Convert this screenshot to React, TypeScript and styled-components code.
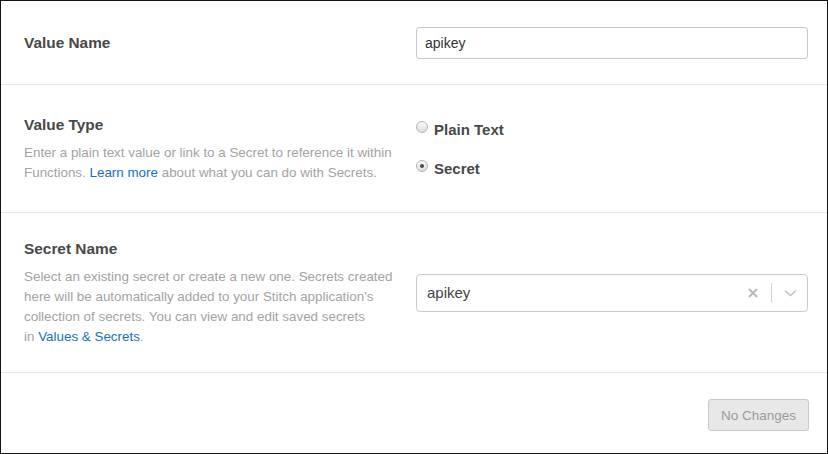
import styled, { createGlobalStyle } from "styled-components";

const GlobalStyle = createGlobalStyle`
  html, body {
    margin: 0;
    padding: 0;
    background: #fff;
  }
  body {
    font-family: "Liberation Sans", Arial, sans-serif;
  }
`;

const App = () => {
  return (
    <>
      <GlobalStyle />
      <Frame>
        <Row $h={84}>
          <Title>Value Name</Title>
          <TextInput defaultValue="apikey" />
        </Row>

        <Row $h={128}>
          <div>
            <Title>Value Type</Title>
            <Description>
              Enter a plain text value or link to a Secret to reference it within
              Functions. <Link href="#">Learn more</Link> about what you can do with
              Secrets.
            </Description>
          </div>
          <RadioGroup>
            <RadioItem>
              <RadioDot />
              Plain Text
            </RadioItem>
            <RadioItem>
              <RadioDot $checked />
              Secret
            </RadioItem>
          </RadioGroup>
        </Row>

        <Row $h={160}>
          <div>
            <Title>Secret Name</Title>
            <Description>
              Select an existing secret or create a new one. Secrets created
              here will be automatically added to your Stitch application's
              collection of secrets. You can view and edit saved secrets
              <br />
              in <Link href="#">Values &amp; Secrets</Link>.
            </Description>
          </div>
          <Select>
            <SelectValue>apikey</SelectValue>
            <SelectControls>
              <svg width="10" height="10" viewBox="0 0 10 10">
                <path d="M1 1L9 9M9 1L1 9" stroke="#b8b8b8" strokeWidth="2" />
              </svg>
              <Separator />
              <svg width="13" height="8" viewBox="0 0 13 8">
                <path d="M1 1.5L6.5 6.5L12 1.5" stroke="#c2c2c2" strokeWidth="1.4" fill="none" />
              </svg>
            </SelectControls>
          </Select>
        </Row>

        <Footer>
          <Button disabled>No Changes</Button>
        </Footer>
      </Frame>
    </>
  );
};

export default App;

const Frame = styled.div`
  width: 828px;
  height: 454px;
  box-sizing: border-box;
  border: 1px solid #141414;
  display: flex;
  flex-direction: column;
`;

const Row = styled.div<{ $h: number }>`
  box-sizing: border-box;
  min-height: ${(p) => p.$h}px;
  display: grid;
  grid-template-columns: 1fr 1fr;
  align-items: center;
  padding: 0 19px 0 23px;
  border-bottom: 1px solid #e8e8e8;
`;

const Title = styled.div`
  font-size: 15.4px;
  line-height: 20px;
  font-weight: bold;
  color: #484848;
`;

const Description = styled.p`
  margin: 8px 0 0;
  padding-right: 8px;
  font-size: 13.4px;
  line-height: 20px;
  color: #a3a3a3;
`;

const Link = styled.a`
  color: #1a6fbf;
  text-decoration: none;
`;

const TextInput = styled.input`
  box-sizing: border-box;
  height: 32px;
  width: 100%;
  padding: 0 8px;
  border: 1px solid #c8c8c8;
  border-radius: 3px;
  font-family: "Liberation Sans", Arial, sans-serif;
  font-size: 14px;
  color: #333;
  outline: none;
`;

const RadioGroup = styled.div`
  display: flex;
  flex-direction: column;
  gap: 19px;
`;

const RadioItem = styled.label`
  display: flex;
  align-items: center;
  gap: 6px;
  height: 20px;
  font-size: 15px;
  font-weight: bold;
  color: #484848;
`;

const RadioDot = styled.span<{ $checked?: boolean }>`
  box-sizing: border-box;
  width: 12px;
  height: 12px;
  margin-bottom: 4px;
  border-radius: 50%;
  border: 1px solid #b4b4b4;
  background: linear-gradient(#fcfcfc, #dcdcdc);
  display: flex;
  align-items: center;
  justify-content: center;
  &::after {
    content: "";
    display: ${(p) => (p.$checked ? "block" : "none")};
    width: 4px;
    height: 4px;
    border-radius: 50%;
    background: #4a4a4a;
  }
`;

const Select = styled.div`
  box-sizing: border-box;
  height: 38px;
  display: flex;
  align-items: center;
  justify-content: space-between;
  padding: 0 10px 0 10px;
  border: 1px solid #cbcbcb;
  border-radius: 4px;
`;

const SelectValue = styled.span`
  font-size: 15px;
  color: #444;
`;

const SelectControls = styled.div`
  display: flex;
  align-items: center;
  & > svg:first-child {
    margin-right: 13px;
  }
  & > svg:last-child {
    margin-left: 12px;
  }
`;

const Separator = styled.span`
  width: 1px;
  height: 19px;
  background: #d0d0d0;
`;

const Footer = styled.div`
  display: flex;
  justify-content: flex-end;
  padding: 26px 18px 0;
`;

const Button = styled.button`
  box-sizing: border-box;
  height: 32px;
  padding: 0 12px;
  border: 1px solid #c8c8c8;
  border-radius: 3px;
  background: #e8e8e8;
  font-family: "Liberation Sans", Arial, sans-serif;
  font-size: 13.5px;
  color: #9b9b9b;
`;
